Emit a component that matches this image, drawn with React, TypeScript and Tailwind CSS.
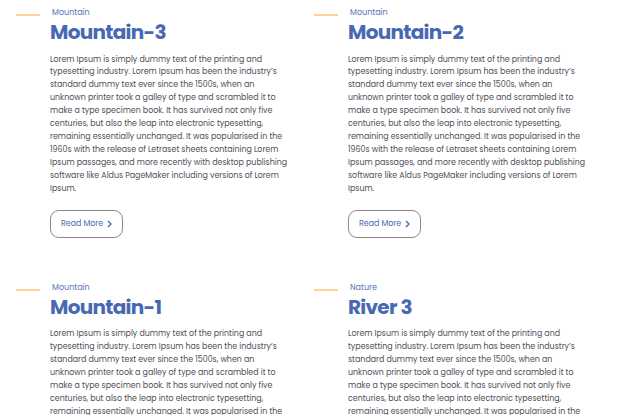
import React from "react";

const LINES = [
  "Lorem Ipsum is simply dummy text of the printing and",
  "typesetting industry. Lorem Ipsum has been the industry\u2019s",
  "standard dummy text ever since the 1500s, when an",
  "unknown printer took a galley of type and scrambled it to",
  "make a type specimen book. It has survived not only five",
  "centuries, but also the leap into electronic typesetting,",
  "remaining essentially unchanged. It was popularised in the",
  "1960s with the release of Letraset sheets containing Lorem",
  "Ipsum passages, and more recently with desktop publishing",
  "software like Aldus PageMaker including versions of Lorem",
  "Ipsum.",
];

const posts = [
  { cat: "Mountain", title: "Mountain-3" },
  { cat: "Mountain", title: "Mountain-2" },
  { cat: "Mountain", title: "Mountain-1" },
  { cat: "Nature", title: "River 3" },
];

function Card({ cat, title }: { cat: string; title: string }) {
  return (
    <div className="flex items-start">
      <div className="mt-[6px] h-[2px] w-[24px] shrink-0 bg-[#fcd394]" />
      <div className="ml-[10px] flex flex-col items-start">
        <div className="ml-[2px] text-[8px] leading-[10px] text-[#5a73b9]">{cat}</div>
        <h2 className="mt-[1px] text-[20px] font-bold leading-[26px] tracking-[-0.7px] text-[#4869b2]">
          {title}
        </h2>
        <p className="mt-[8.5px] text-[7.9px] leading-[12.9px] text-[#4f4f58]">
          {LINES.map((l, i) => (
            <span key={i} className="block whitespace-nowrap">
              {l}
            </span>
          ))}
        </p>
        <button className="mt-[14.5px] flex h-[28px] w-[73px] items-center rounded-[9px] border border-[#8a8a8a] pl-[10px] text-[7.9px] text-[#4869b2]">
          <span>Read More</span>
          <svg width="7" height="8" viewBox="0 0 7 8" className="ml-[3px]">
            <path d="M2 1 L5 4 L2 7" fill="none" stroke="#4869b2" strokeWidth="1.4" />
          </svg>
        </button>
      </div>
    </div>
  );
}

export default function App() {
  return (
    <div
      className="grid w-[622px] grid-cols-[298px_298px] gap-y-[45px] bg-white pl-[16px] pt-[8px]"
      style={{ fontFamily: "Poppins, Inter, 'Open Sans', sans-serif" }}
    >
      {posts.map((p) => (
        <Card key={p.title} {...p} />
      ))}
    </div>
  );
}
